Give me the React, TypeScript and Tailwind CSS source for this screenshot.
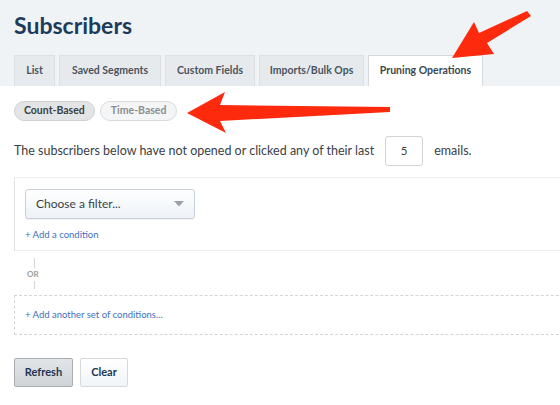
import React from "react";

const tabs = [
  { label: "List", w: "w-[41px]" },
  { label: "Saved Segments", w: "w-[102px]" },
  { label: "Custom Fields", w: "w-[90px]" },
  { label: "Imports/Bulk Ops", w: "w-[105px]" },
  { label: "Pruning Operations", w: "w-[115px]", active: true },
];

export default function App() {
  return (
    <div
      className="relative w-[560px] h-[405px] overflow-hidden bg-white"
      style={{ fontFamily: "Lato, 'Open Sans', sans-serif" }}
    >
      {/* Header */}
      <div className="bg-[#f0f3f5] pt-[9px] px-[14px]">
        <h1 className="text-[23px] leading-[32px] font-bold text-[#1c3b5a]">Subscribers</h1>
        <div className="mt-[14px] flex gap-[4px] h-[31px]">
          {tabs.map((t) => (
            <div
              key={t.label}
              className={`${t.w} flex items-center justify-center border border-b-0 text-[10.5px] font-bold ${
                t.active
                  ? "bg-white border-[#d6dadd] text-[#3a4651]"
                  : "bg-[#e7eaec] border-[#dde1e4] text-[#4a5560]"
              }`}
            >
              {t.label}
            </div>
          ))}
        </div>
      </div>

      {/* Body */}
      <div className="px-[14px] pt-[15px]">
        <div className="flex gap-[5px]">
          <div className="h-[20px] px-[9px] flex items-center rounded-full bg-[#e3e4e5] border border-[#cfd1d3] text-[10.5px] font-bold text-[#3b3f44]">
            Count-Based
          </div>
          <div className="h-[20px] px-[10px] flex items-center rounded-full bg-[#f4f5f6] border border-[#d8dadc] text-[10.5px] font-bold text-[#8a8f94]">
            Time-Based
          </div>
        </div>

        <div className="mt-[15px] flex items-center text-[12.5px] text-[#3b4148]">
          <span>The subscribers below have not opened or clicked any of their last</span>
          <div className="ml-[11px] w-[38px] h-[30px] flex items-center justify-center border border-[#d0d4d8] rounded-[3px] text-[11.5px] text-[#444]">
            5
          </div>
          <span className="ml-[11px]">emails.</span>
        </div>

        {/* Filter set */}
        <div className="mt-[11px] w-[580px] h-[74px] border border-[#eeeeee] border-l-[#e2e2e2] pl-[10px] pt-[11px]">
          <div className="w-[170px] h-[30px] flex items-center justify-between px-[10px] rounded-[3px] border border-[#c8d1d9] bg-gradient-to-b from-white to-[#edf2f7] shadow-[0_1px_1px_rgba(0,0,0,0.06)]">
            <span className="text-[12px] text-[#3a3f45]">Choose a filter...</span>
            <svg width="10" height="6" viewBox="0 0 10 6">
              <polygon points="0,0 10,0 5,5.5" fill="#9aa1a8" />
            </svg>
          </div>
          <div className="mt-[9px] text-[9.5px] text-[#3d6fc0]">+ Add a condition</div>
        </div>

        {/* OR */}
        <div className="flex flex-col items-start pl-[13px] pt-[7px]">
          <div className="ml-[7px] w-px h-[10px] bg-[#d5d5d5]" />
          <div className="text-[8px] leading-[12px] font-bold text-[#9a9ea2]">OR</div>
          <div className="mt-[1px] ml-[7px] w-px h-[8px] bg-[#d5d5d5]" />
        </div>

        <div className="mt-[6px] w-[580px] h-[40px] border border-dashed border-[#d3d6d9] pl-[10px] flex items-center">
          <span className="text-[9.5px] text-[#3d6fc0]">+ Add another set of conditions...</span>
        </div>

        <div className="mt-[23px] flex gap-[7px]">
          <div className="w-[59px] h-[29px] flex items-center justify-center rounded-[2px] border border-[#a7adb2] bg-gradient-to-b from-[#e3e6e8] to-[#cfd3d6] text-[11px] font-bold text-[#1f3550]">
            Refresh
          </div>
          <div className="w-[48px] h-[29px] flex items-center justify-center rounded-[2px] border border-[#d4d9de] bg-gradient-to-b from-white to-[#f0f4f8] text-[11px] font-bold text-[#1f3550]">
            Clear
          </div>
        </div>
      </div>

      {/* Annotation arrows */}
      <svg className="absolute left-0 top-0 pointer-events-none" width="560" height="405">
        <polygon
          points="452,58 474,22 479,33 527,11 531,16 487,43 494,54"
          fill="#fe2a0e"
        />
        <polygon
          points="187,113 225,92 220,105 390,107 390,112 220,121 226,133"
          fill="#fe2a0e"
        />
      </svg>
    </div>
  );
}
